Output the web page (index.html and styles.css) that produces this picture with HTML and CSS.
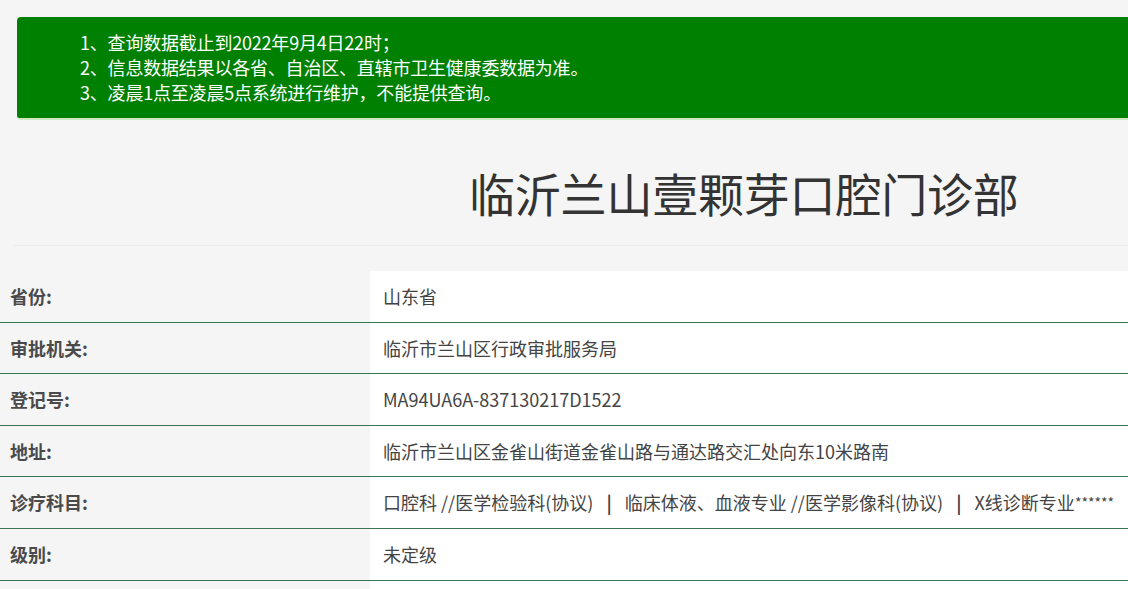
FILE: index.html
```html
<!DOCTYPE html>
<html lang="zh-CN">
<head>
<meta charset="utf-8">
<title>临沂兰山壹颗芽口腔门诊部</title>
<link rel="stylesheet" href="styles.css">
</head>
<body>
<div class="page">
  <div class="notice">
    <p>1、查询数据截止到2022年9月4日22时；</p>
    <p>2、信息数据结果以各省、自治区、直辖市卫生健康委数据为准。</p>
    <p>3、凌晨1点至凌晨5点系统进行维护，不能提供查询。</p>
  </div>
  <h1 class="title">临沂兰山壹颗芽口腔门诊部</h1>
  <div class="rule"></div>
  <div class="table">
    <div class="row"><div class="label">省份:</div><div class="value">山东省</div></div>
    <div class="row"><div class="label">审批机关:</div><div class="value">临沂市兰山区行政审批服务局</div></div>
    <div class="row"><div class="label">登记号:</div><div class="value">MA94UA6A-837130217D1522</div></div>
    <div class="row"><div class="label">地址:</div><div class="value">临沂市兰山区金雀山街道金雀山路与通达路交汇处向东10米路南</div></div>
    <div class="row"><div class="label">诊疗科目:</div><div class="value">口腔科 //医学检验科(协议) &nbsp;<b class="bar">|</b>&nbsp; 临床体液、血液专业 //医学影像科(协议) &nbsp;<b class="bar">|</b>&nbsp; X线诊断专业<span class="stars">******</span></div></div>
    <div class="row"><div class="label">级别:</div><div class="value">未定级</div></div>
    <div class="row"><div class="label">&nbsp;</div><div class="value">&nbsp;</div></div>
  </div>
</div>
</body>
</html>
```

FILE: styles.css
```css
html, body {
  margin: 0;
  padding: 0;
  background: #f5f5f5;
  overflow: hidden;
}
body {
  font-family: "Microsoft YaHei", "Noto Sans CJK SC", "Noto Sans", sans-serif;
  color: #444;
}
.page {
  width: 1128px;
  height: 589px;
  overflow: hidden;
}
.notice {
  margin: 17px -40px 0 17px;
  background: #008000;
  border-bottom: 2px solid #cfe8c4;
  border-radius: 4px;
  padding: 13px 0 13px 63px;
  color: #fff;
  font-size: 18px;
  line-height: 25px;
}
.notice p {
  margin: 0;
  letter-spacing: -0.2px;
}
.title {
  margin: 0;
  padding: 44px 0 0 469px;
  font-size: 46px;
  font-weight: normal;
  line-height: 56px;
  color: #333;
  white-space: nowrap;
  letter-spacing: -0.2px;
}
.rule {
  margin: 25px 0 0 14px;
  border-top: 1px solid #ebebeb;
}
.table {
  margin-top: 25px;
}
.row {
  display: flex;
  border-bottom: 1px solid #3a7556;
}
.label {
  width: 360px;
  padding: 14px 0 14px 10px;
  font-size: 18px;
  line-height: 22.6px;
  font-weight: bold;
  color: #4a4a4a;
}
.value {
  flex: 1;
  background: #fff;
  padding: 14px 0 14px 13px;
  font-size: 18px;
  line-height: 22.6px;
  color: #444;
  white-space: nowrap;
}
.bar {
  font-weight: bold;
  margin: 0 5px;
}
.stars {
  font-size: 14px;
  vertical-align: top;
}
```
